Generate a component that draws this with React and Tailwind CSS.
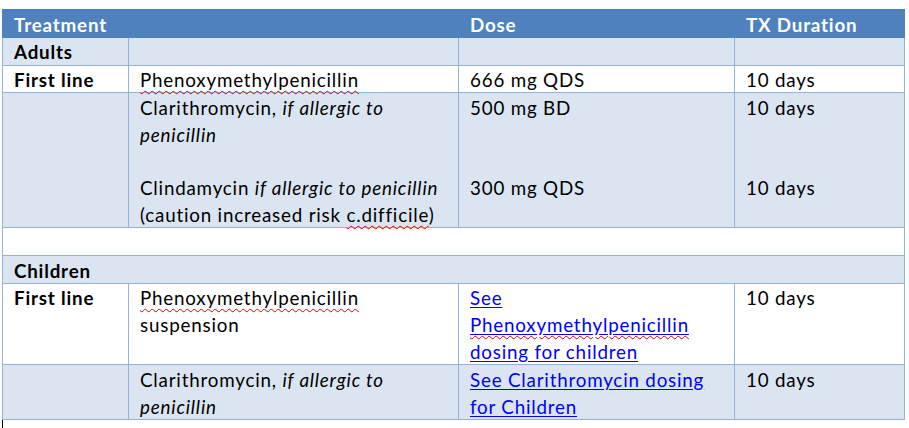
import React from 'react';

const Spell = ({ children }) => (
  <span className="underline decoration-wavy decoration-[#e00000] decoration-1 underline-offset-[3px]">{children}</span>
);

const Link = ({ children }) => (
  <a href="#" className="text-[#0000ff] underline decoration-[#0000ff] underline-offset-[2px]">
    {children}
  </a>
);

// cell content nudged down a little without changing the row height
const Cell = ({ children, bold, colSpan }) => (
  <td
    colSpan={colSpan}
    className={`border border-[#95b3d7] align-top pl-[11px] pr-[4px] pt-[1.5px] pb-0 ${bold ? 'font-bold' : ''}`}
  >
    <div className="-mb-[1.5px]">{children}</div>
  </td>
);

const Head = ({ children }) => (
  <th className="text-left align-top pl-[11px] pr-[4px] pt-[1.5px] pb-0 border border-[#4f81bd]">
    <div className="-mb-[1.5px]">{children}</div>
  </th>
);

export default function App() {
  const light = 'bg-[#dbe5f1]';

  return (
    <div className="w-[909px] h-[428px] bg-white pt-[9px] pl-[2px] overflow-hidden text-black text-[18.8px] leading-[26.8px] tracking-[0.8px] whitespace-nowrap [font-family:Lato,'Liberation_Sans',sans-serif]">
      <table className="border-collapse table-fixed w-[902px]">
        <colgroup>
          <col className="w-[126px]" />
          <col className="w-[330px]" />
          <col className="w-[276px]" />
          <col className="w-[170px]" />
        </colgroup>
        <thead>
          <tr className="bg-[#4f81bd] text-white font-bold">
            <Head>Treatment</Head>
            <Head>&nbsp;</Head>
            <Head>Dose</Head>
            <Head>TX Duration</Head>
          </tr>
        </thead>
        <tbody>
          <tr className={light}>
            <Cell bold>Adults</Cell>
            <Cell>&nbsp;</Cell>
            <Cell>&nbsp;</Cell>
            <Cell>&nbsp;</Cell>
          </tr>
          <tr className="bg-white">
            <Cell bold>First line</Cell>
            <Cell><Spell>Phenoxymethylpenicillin</Spell></Cell>
            <Cell>666 mg QDS</Cell>
            <Cell>10 days</Cell>
          </tr>
          <tr className={light}>
            <Cell>&nbsp;</Cell>
            <Cell>
              <div>Clarithromycin, <em>if allergic to</em></div>
              <div><em>penicillin</em></div>
              <div>&nbsp;</div>
              <div>Clindamycin <em>if allergic to penicillin</em></div>
              <div>(caution increased risk <Spell>c.difficile</Spell>)</div>
            </Cell>
            <Cell>
              <div>500 mg BD</div>
              <div>&nbsp;</div>
              <div>&nbsp;</div>
              <div>300 mg QDS</div>
            </Cell>
            <Cell>
              <div>10 days</div>
              <div>&nbsp;</div>
              <div>&nbsp;</div>
              <div>10 days</div>
            </Cell>
          </tr>
          <tr className="bg-white">
            <Cell colSpan={4}>&nbsp;</Cell>
          </tr>
          <tr className={light}>
            <Cell bold colSpan={4}>Children</Cell>
          </tr>
          <tr className="bg-white">
            <Cell bold>First line</Cell>
            <Cell>
              <div><Spell>Phenoxymethylpenicillin</Spell></div>
              <div>suspension</div>
            </Cell>
            <Cell>
              <Link>
                See
                <br />
                <Spell>Phenoxymethylpenicillin</Spell>
                <br />
                dosing for children
              </Link>
            </Cell>
            <Cell>10 days</Cell>
          </tr>
          <tr className={light}>
            <Cell>&nbsp;</Cell>
            <Cell>
              <div>Clarithromycin, <em>if allergic to</em></div>
              <div><em>penicillin</em></div>
            </Cell>
            <Cell>
              <Link>
                See Clarithromycin dosing
                <br />
                for Children
              </Link>
            </Cell>
            <Cell>10 days</Cell>
          </tr>
        </tbody>
      </table>
      <div className="w-px h-[8px] bg-black"></div>
    </div>
  );
}
